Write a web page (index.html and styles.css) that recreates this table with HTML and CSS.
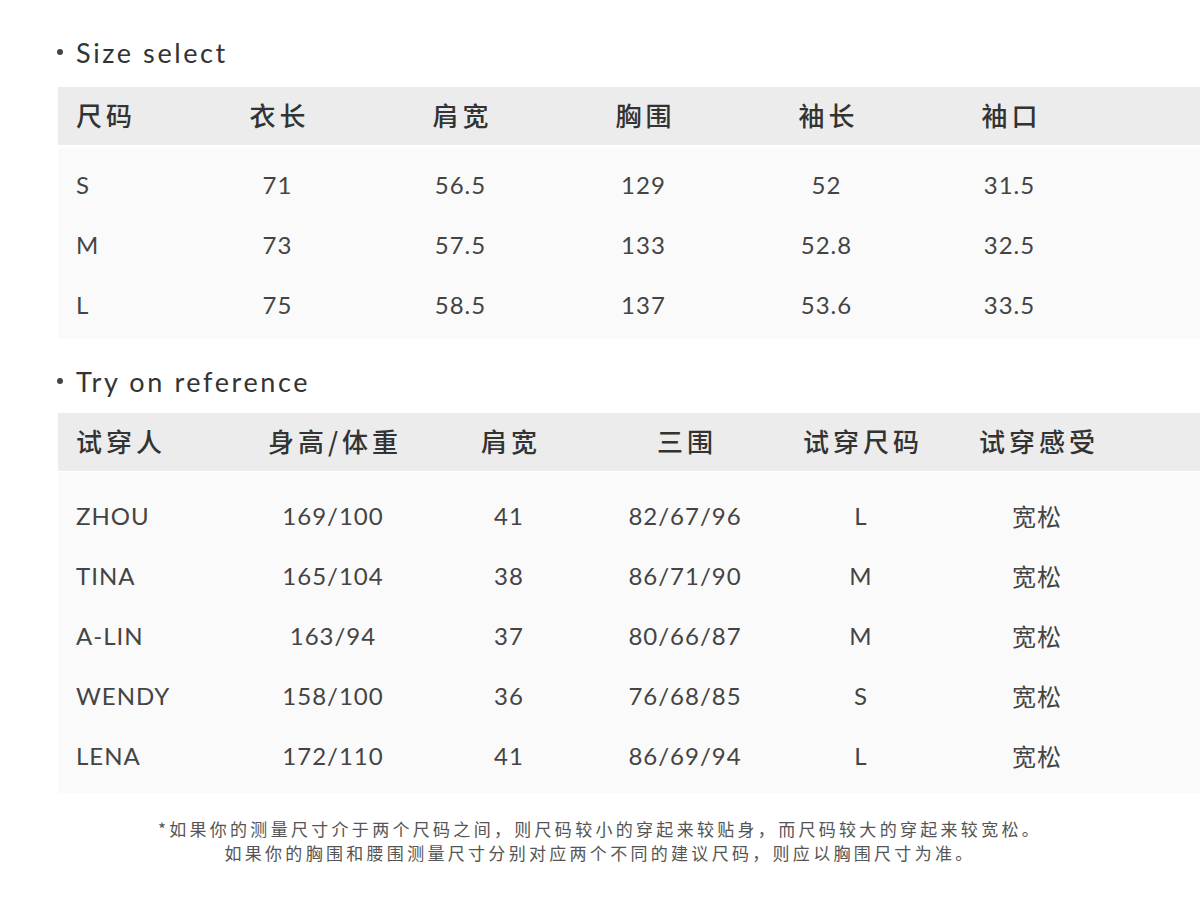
FILE: index.html
```html
<!DOCTYPE html>
<html lang="zh-CN">
<head>
<meta charset="utf-8">
<title>Size</title>
<link rel="stylesheet" href="styles.css">
</head>
<body>
<div class="page">
  <h2 class="title title-first"><span class="dot"></span>Size select</h2>
  <div class="table t1">
    <div class="thead row">
      <div class="c first">尺码</div><div class="c">衣长</div><div class="c">肩宽</div><div class="c">胸围</div><div class="c">袖长</div><div class="c">袖口</div>
    </div>
    <div class="tbody">
      <div class="row"><div class="c first">S</div><div class="c">71</div><div class="c">56.5</div><div class="c">129</div><div class="c">52</div><div class="c">31.5</div></div>
      <div class="row"><div class="c first">M</div><div class="c">73</div><div class="c">57.5</div><div class="c">133</div><div class="c">52.8</div><div class="c">32.5</div></div>
      <div class="row"><div class="c first">L</div><div class="c">75</div><div class="c">58.5</div><div class="c">137</div><div class="c">53.6</div><div class="c">33.5</div></div>
    </div>
  </div>

  <h2 class="title title-second"><span class="dot"></span>Try on reference</h2>
  <div class="table t2">
    <div class="thead row">
      <div class="c first">试穿人</div><div class="c">身高/体重</div><div class="c">肩宽</div><div class="c">三围</div><div class="c">试穿尺码</div><div class="c">试穿感受</div>
    </div>
    <div class="tbody">
      <div class="row"><div class="c first">ZHOU</div><div class="c">169/100</div><div class="c">41</div><div class="c">82/67/96</div><div class="c">L</div><div class="c">宽松</div></div>
      <div class="row"><div class="c first">TINA</div><div class="c">165/104</div><div class="c">38</div><div class="c">86/71/90</div><div class="c">M</div><div class="c">宽松</div></div>
      <div class="row"><div class="c first">A-LIN</div><div class="c">163/94</div><div class="c">37</div><div class="c">80/66/87</div><div class="c">M</div><div class="c">宽松</div></div>
      <div class="row"><div class="c first">WENDY</div><div class="c">158/100</div><div class="c">36</div><div class="c">76/68/85</div><div class="c">S</div><div class="c">宽松</div></div>
      <div class="row"><div class="c first">LENA</div><div class="c">172/110</div><div class="c">41</div><div class="c">86/69/94</div><div class="c">L</div><div class="c">宽松</div></div>
    </div>
  </div>

  <div class="note">
    <p>*如果你的测量尺寸介于两个尺码之间，则尺码较小的穿起来较贴身，而尺码较大的穿起来较宽松。</p>
    <p>如果你的胸围和腰围测量尺寸分别对应两个不同的建议尺码，则应以胸围尺寸为准。</p>
  </div>
</div>
</body>
</html>
```

FILE: styles.css
```css
* { box-sizing: border-box; }
html, body { margin: 0; padding: 0; background: #ffffff; }
body {
  font-family: "Lato", "Noto Sans CJK SC", sans-serif;
  color: #444444;
  width: 1200px;
  overflow: hidden;
}
.page { padding-top: 36px; }

.title {
  margin: 0;
  height: 32px;
  display: flex;
  align-items: center;
  gap: 13px;
  padding-left: 57px;
  font-weight: 400;
  font-size: 27px;
  letter-spacing: 2.6px;
  color: #333333;
  font-family: "Lato", "Noto Sans CJK SC", sans-serif;
}
.dot {
  width: 6px;
  height: 6px;
  border-radius: 50%;
  background: #444444;
  flex: none;
}
.title-first { margin-bottom: 19px; }
.title-second { margin-top: 26px; margin-bottom: 16px; }

.table { margin-left: 58px; }
.row {
  display: grid;
  align-items: center;
  height: 60px;
}
.t1 .row { grid-template-columns: 128px repeat(5, 183px) 1fr; }
.t2 .row { grid-template-columns: 187px repeat(5, 176px) 1fr; }

.c { text-align: center; white-space: nowrap; }
.c.first { text-align: left; padding-left: 18px; }

.thead {
  height: 58px;
  background: #ececec;
  color: #333333;
  font-family: "Noto Sans CJK SC", sans-serif;
  font-weight: 500;
  font-size: 26px;
  letter-spacing: 4px;
}
.thead .c { padding-bottom: 4px; }
.thead .c:not(.first) { padding-left: 4px; }

.tbody {
  background: #fafafa;
  font-size: 24px;
  letter-spacing: 1px;
  color: #444444;
}
.t1 .tbody { margin-top: 3px; padding: 6px 0 5px; }
.t2 .tbody { margin-top: 1px; padding: 13px 0 8px; }

.note {
  margin-top: 24px;
  text-align: center;
  font-family: "Noto Sans CJK SC", sans-serif;
  font-size: 17px;
  letter-spacing: 3.3px;
  color: #555555;
  line-height: 24px;
}
.note p { margin: 0; }
```
